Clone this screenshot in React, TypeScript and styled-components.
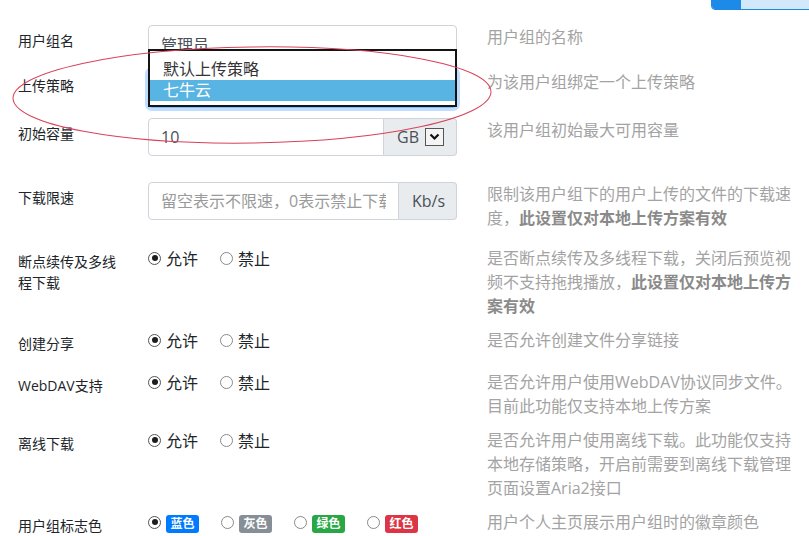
import React from "react";
import styled, { createGlobalStyle } from "styled-components";

const GlobalStyle = createGlobalStyle`
  html, body {
    margin: 0;
    padding: 0;
    background: #fff;
    overflow: hidden;
  }
  body {
    font-family: "Open Sans", "Noto Sans CJK SC", sans-serif;
    color: #212529;
  }
`;

const Page = styled.div`
  position: relative;
  width: 809px;
  height: 536px;
  overflow: hidden;
  padding-top: 25px;
  box-sizing: border-box;
`;

const Row = styled.div<{ $h?: number }>`
  display: flex;
  align-items: flex-start;
  padding-left: 18px;
  height: ${(p) => (p.$h ? `${p.$h}px` : "auto")};
`;

const Label = styled.div`
  width: 108px;
  margin-right: 22px;
  padding-top: 5px;
  font-size: 14px;
  line-height: 21px;
  color: #212529;
`;

const Control = styled.div`
  position: relative;
  width: 309px;
  flex-shrink: 0;
`;

const Help = styled.div`
  width: 312px;
  margin-left: 30px;
  font-size: 16px;
  line-height: 24px;
  color: #a3a3a3;
`;

const Strong = styled.span`
  color: #8a8a8a;
  font-weight: 700;
`;

const TextInput = styled.input`
  display: block;
  width: 100%;
  height: 38px;
  box-sizing: border-box;
  border: 1px solid #ced4da;
  border-radius: 4px;
  padding: 0 12px;
  font-family: inherit;
  font-size: 16px;
  color: #495057;
  background: #fff;
  outline: none;

  &::placeholder {
    color: #9a9a9a;
  }
`;

const FocusSelect = styled.div`
  height: 38px;
  box-sizing: border-box;
  border: 1px solid #80bdff;
  border-radius: 4px;
  box-shadow: 0 0 0 3px rgba(0, 123, 255, 0.25);
  background: #fff;
`;

const DropList = styled.div`
  position: absolute;
  z-index: 2;
  left: 0;
  top: -21px;
  width: 309px;
  height: 58px;
  box-sizing: border-box;
  border: 2px solid #141414;
  background: #fff;
  padding: 8px 0 4px;
`;

const Option = styled.div<{ $active?: boolean }>`
  height: 21px;
  line-height: 21px;
  padding-left: 13px;
  font-size: 16px;
  color: ${(p) => (p.$active ? "#fff" : "#333")};
  background: ${(p) => (p.$active ? "#58b4e2" : "transparent")};
`;

const Group = styled.div`
  display: flex;
  height: 38px;
`;

const GroupInput = styled(TextInput)`
  flex: 1;
  min-width: 0;
  border-top-right-radius: 0;
  border-bottom-right-radius: 0;
`;

const Addon = styled.div<{ $w: number }>`
  display: flex;
  align-items: center;
  width: ${(p) => p.$w}px;
  box-sizing: border-box;
  padding-left: 13px;
  border: 1px solid #ced4da;
  border-left: none;
  border-radius: 0 4px 4px 0;
  background: #e9ecef;
  font-size: 16px;
  color: #495057;
`;

const MiniSelect = styled.span`
  display: inline-flex;
  align-items: center;
  justify-content: center;
  width: 19px;
  height: 18px;
  margin-left: 6px;
  box-sizing: border-box;
  border: 1px solid #555;
  background: #f4f4f4;
`;

const Radios = styled.div`
  display: flex;
  align-items: center;
  height: 24px;
  gap: 22px;
`;

const RadioItem = styled.label`
  display: inline-flex;
  align-items: center;
  gap: 5px;
  font-size: 16px;
  color: #212529;
`;

const Circle = styled.span<{ $on?: boolean }>`
  position: relative;
  width: 13px;
  height: 13px;
  box-sizing: border-box;
  border-radius: 50%;
  border: 1px solid ${(p) => (p.$on ? "#555" : "#8a8a8a")};
  background: #fff;

  &::after {
    content: "";
    display: ${(p) => (p.$on ? "block" : "none")};
    position: absolute;
    left: 2.5px;
    top: 2.5px;
    width: 6px;
    height: 6px;
    border-radius: 50%;
    background: #1d1d1d;
  }
`;

const Badge = styled.span<{ $bg: string }>`
  display: inline-block;
  margin-top: 3px;
  padding: 3px 4.5px;
  border-radius: 3px;
  font-size: 12px;
  line-height: 12px;
  font-weight: 700;
  color: #fff;
  background: ${(p) => p.$bg};
`;

const TopButton = styled.div`
  position: absolute;
  top: -16px;
  right: -12px;
  display: flex;
  height: 24px;
  border: 1px solid #1c8ae6;
  border-radius: 4px;
  overflow: hidden;
`;

const TopButtonIcon = styled.span`
  width: 29px;
  background: #1c8ae6;
`;

const TopButtonText = styled.span`
  width: 79px;
  background: #d2e8fb;
`;

const Annotation = styled.svg`
  position: absolute;
  left: 0;
  top: 0;
  z-index: 5;
  pointer-events: none;
`;

const Chevron = () => (
  <svg width="11" height="8" viewBox="0 0 11 8">
    <path d="M1.5 1.5 L5.5 5.5 L9.5 1.5" fill="none" stroke="#111" strokeWidth="2.2" />
  </svg>
);

const AllowDeny = () => (
  <Radios>
    <RadioItem>
      <Circle $on />
      允许
    </RadioItem>
    <RadioItem>
      <Circle />
      禁止
    </RadioItem>
  </Radios>
);

const badges = [
  { text: "蓝色", bg: "#007bff", on: true },
  { text: "灰色", bg: "#868e96", on: false },
  { text: "绿色", bg: "#28a745", on: false },
  { text: "红色", bg: "#dc3545", on: false },
];

export default function App() {
  return (
    <>
      <GlobalStyle />
      <Page>
        <TopButton>
          <TopButtonIcon />
          <TopButtonText />
        </TopButton>

        <Row $h={45}>
          <Label>用户组名</Label>
          <Control>
            <TextInput defaultValue="管理员" readOnly />
          </Control>
          <Help>用户组的名称</Help>
        </Row>

        <Row $h={48}>
          <Label>上传策略</Label>
          <Control>
            <FocusSelect />
            <DropList>
              <Option>默认上传策略</Option>
              <Option $active>七牛云</Option>
            </DropList>
          </Control>
          <Help>为该用户组绑定一个上传策略</Help>
        </Row>

        <Row $h={64}>
          <Label>初始容量</Label>
          <Control>
            <Group>
              <GroupInput defaultValue="10" readOnly />
              <Addon $w={73}>
                GB
                <MiniSelect>
                  <Chevron />
                </MiniSelect>
              </Addon>
            </Group>
          </Control>
          <Help>该用户组初始最大可用容量</Help>
        </Row>

        <Row $h={64}>
          <Label>下载限速</Label>
          <Control>
            <Group>
              <GroupInput placeholder="留空表示不限速，0表示禁止下载" />
              <Addon $w={58}>Kb/s</Addon>
            </Group>
          </Control>
          <Help>
            限制该用户组下的用户上传的文件的下载速度，<Strong>此设置仅对本地上传方案有效</Strong>
          </Help>
        </Row>

        <Row $h={82}>
          <Label>断点续传及多线程下载</Label>
          <Control>
            <AllowDeny />
          </Control>
          <Help>
            是否断点续传及多线程下载，关闭后预览视频不支持拖拽播放，<Strong>此设置仅对本地上传方案有效</Strong>
          </Help>
        </Row>

        <Row $h={42}>
          <Label>创建分享</Label>
          <Control>
            <AllowDeny />
          </Control>
          <Help>是否允许创建文件分享链接</Help>
        </Row>

        <Row $h={58}>
          <Label>WebDAV支持</Label>
          <Control>
            <AllowDeny />
          </Control>
          <Help>是否允许用户使用WebDAV协议同步文件。目前此功能仅支持本地上传方案</Help>
        </Row>

        <Row $h={82}>
          <Label>离线下载</Label>
          <Control>
            <AllowDeny />
          </Control>
          <Help>
            是否允许用户使用离线下载。此功能仅支持本地存储策略，开启前需要到离线下载管理页面设置Aria2接口
          </Help>
        </Row>

        <Row>
          <Label>用户组标志色</Label>
          <Control>
            <Radios>
              {badges.map((b) => (
                <RadioItem key={b.text}>
                  <Circle $on={b.on} />
                  <Badge $bg={b.bg}>{b.text}</Badge>
                </RadioItem>
              ))}
            </Radios>
          </Control>
          <Help>用户个人主页展示用户组时的徽章颜色</Help>
        </Row>

        <Annotation width="809" height="536">
          <ellipse
            cx="252"
            cy="95"
            rx="239"
            ry="48"
            fill="none"
            stroke="#d9415a"
            strokeWidth="1"
            transform="rotate(-0.8 252 95)"
          />
        </Annotation>
      </Page>
    </>
  );
}
